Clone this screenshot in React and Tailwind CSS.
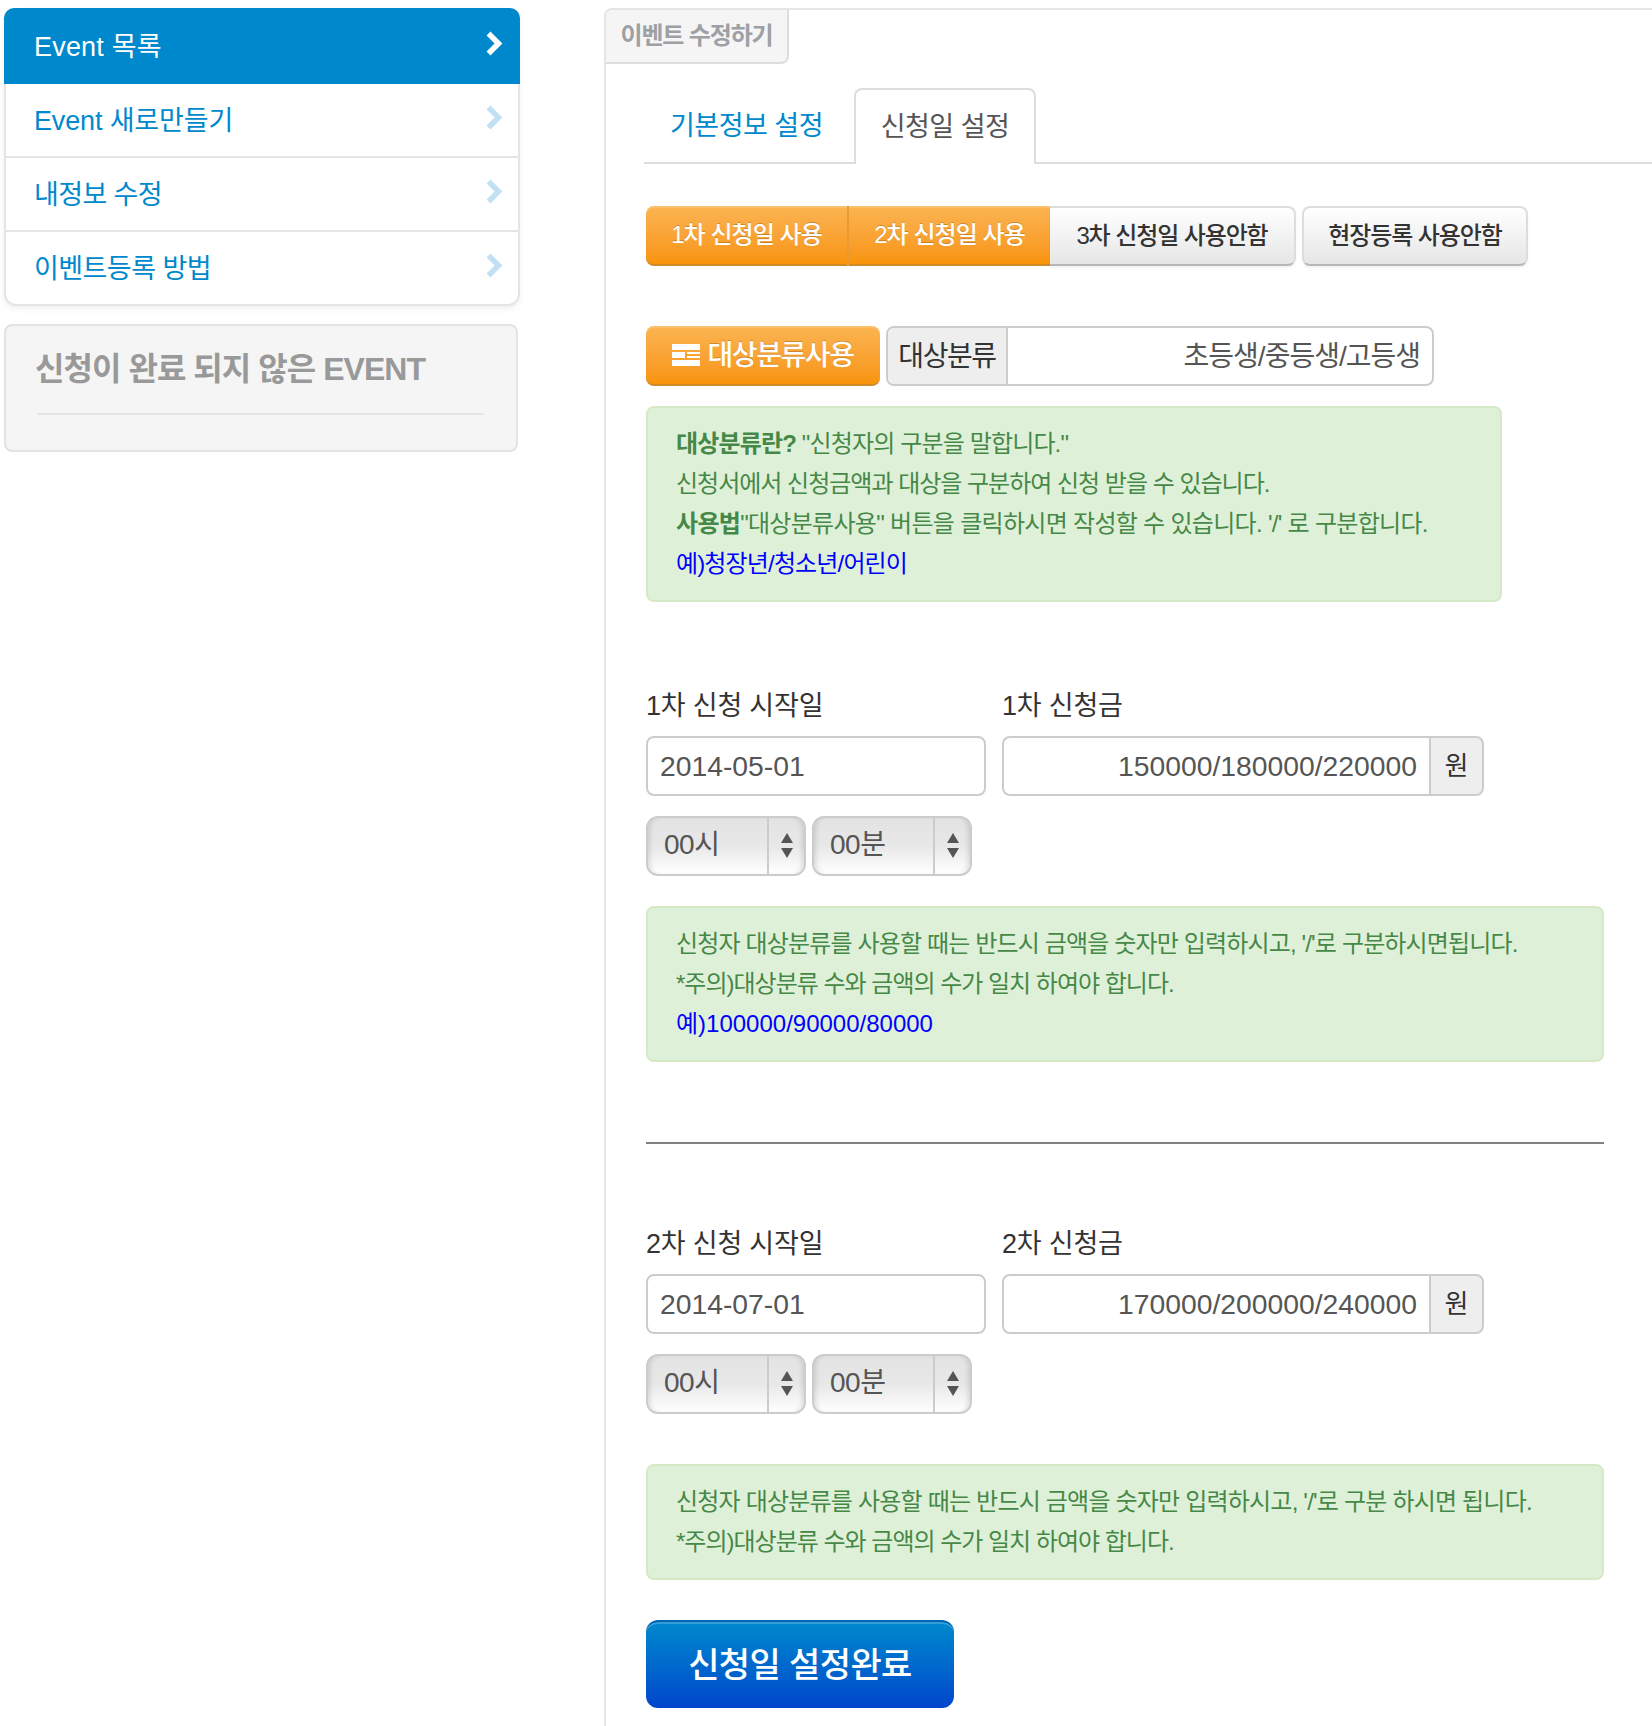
import React from 'react';

function Chevron({ active }) {
  return (
    <svg width="18" height="27" viewBox="0 0 18 27" className="shrink-0">
      <path d="M3.5 3.5 L13.5 13.5 L3.5 23.5" fill="none" stroke={active ? '#ffffff' : '#c2e0f4'} strokeWidth="5.5" />
    </svg>
  );
}

function SideItem({ label, active, last, track = 'tracking-[-0.15px]' }) {
  if (active) {
    return (
      <div className="h-[76px] -mx-[2px] -mt-[2px] pl-[30px] pr-[17px] flex items-center justify-between bg-[#0088cc] rounded-t-[10px] text-white text-[27px] tracking-[0.2px]">
        <span className="mt-[2px]">{label}</span>
        <span className="-mt-[6px]"><Chevron active /></span>
      </div>
    );
  }
  return (
    <div className={`${last ? 'h-[72px]' : 'h-[74px] border-b-2 border-[#e5e5e5]'} pl-[28px] pr-[15px] flex items-center justify-between text-[#0088cc] text-[27px] ${track}`}>
      <span className="mt-[2px]">{label}</span>
      <span className="-mt-[6px]"><Chevron /></span>
    </div>
  );
}

function OrangeButton({ children, className }) {
  return (
    <div className={`h-[60px] flex items-center justify-center text-white text-[24px] font-medium tracking-[-0.95px] [text-shadow:0_-1px_0_rgba(0,0,0,0.2)] bg-gradient-to-b from-[#fbb450] to-[#f89406] border-b-2 border-[#d08a2c] shadow-[inset_0_2px_0_rgba(255,255,255,0.15)] ${className}`}>
      {children}
    </div>
  );
}

function GrayButton({ children, className }) {
  return (
    <div className={`h-[60px] flex items-center justify-center text-[#333333] text-[24px] font-medium tracking-[-1.1px] bg-gradient-to-b from-white to-[#e6e6e6] border-2 border-[#dddddd] border-b-[#b8b8b8] shadow-[0_2px_3px_rgba(0,0,0,0.05)] ${className}`}>
      {children}
    </div>
  );
}

function TimeSelect({ label }) {
  return (
    <div className="w-[160px] h-[60px] flex border-2 border-[#cccccc] rounded-[12px] bg-gradient-to-b from-[#e3e3e3] via-[#e8e8e8] to-white shadow-[inset_5px_0_5px_-3px_rgba(0,0,0,0.12),inset_-5px_0_5px_-3px_rgba(0,0,0,0.12)] overflow-hidden">
      <div className="w-[119px] pl-[16px] flex items-center text-[#555555] text-[28px] leading-none -mt-[2px] tracking-[-0.5px]">{label}</div>
      <div className="flex-1 border-l-2 border-[#cccccc] flex flex-col items-center justify-center gap-[3px] -mt-[1px]">
        <svg width="14" height="12" viewBox="0 0 14 12"><path d="M7 1 L13 11 L1 11 Z" fill="#555555" /></svg>
        <svg width="14" height="12" viewBox="0 0 14 12"><path d="M1 1 L13 1 L7 11 Z" fill="#555555" /></svg>
      </div>
    </div>
  );
}

function DateBlock({ round, date, price }) {
  return (
    <div>
      <div className="flex">
        <div className="w-[356px]">
          <div className="text-[#333333] text-[27px] leading-[40px] tracking-[-0.2px] h-[40px] pt-[1px]">{round}차 신청 시작일</div>
          <div className="mt-[11px] w-[340px] h-[60px] border-2 border-[#cccccc] rounded-[8px] flex items-center pl-[12px] text-[#555555] text-[28.3px]">{date}</div>
        </div>
        <div>
          <div className="text-[#333333] text-[27px] leading-[40px] tracking-[-0.2px] h-[40px] pt-[1px]">{round}차 신청금</div>
          <div className="mt-[11px] flex h-[60px]">
            <div className="w-[427px] border-2 border-r-0 border-[#cccccc] rounded-l-[8px] flex items-center justify-end pr-[12px] text-[#555555] text-[28.3px]">{price}</div>
            <div className="w-[55px] border-2 border-[#cccccc] rounded-r-[8px] bg-[#eeeeee] flex items-center justify-center text-[#333333] text-[26px]">원</div>
          </div>
        </div>
      </div>
      <div className="mt-[20px] flex gap-[6px]">
        <TimeSelect label="00시" />
        <TimeSelect label="00분" />
      </div>
    </div>
  );
}

function Alert({ children, className }) {
  return (
    <div className={`bg-[#dff0d8] border-2 border-[#d6e9c6] rounded-[8px] text-[#468847] text-[24px] leading-[40px] tracking-[-0.85px] pl-[28px] pt-[16px] ${className}`}>
      {children}
    </div>
  );
}

export default function App() {
  return (
    <div className="w-[1652px] h-[1726px] bg-white overflow-hidden flex items-start font-['Liberation_Sans','Noto_Sans_CJK_KR',sans-serif]">
      {/* 왼쪽 메뉴 */}
      <div className="w-[604px] shrink-0 pl-[4px] pt-[8px]">
        <div className="w-[516px] bg-white border-2 border-[#e5e5e5] rounded-[12px] shadow-[0_3px_6px_rgba(0,0,0,0.06)]">
          <SideItem label="Event 목록" active />
          <SideItem label="Event 새로만들기" />
          <SideItem label="내정보 수정" track="tracking-[-0.6px]" />
          <SideItem label="이벤트등록 방법" last track="tracking-[-0.55px]" />
        </div>
        <div className="mt-[18px] w-[514px] h-[128px] bg-[#f5f5f5] border-2 border-[#e3e3e3] rounded-[8px] pl-[31px] pr-[32px] pt-[23px]">
          <div className="text-[#999999] text-[32px] font-bold leading-[40px] tracking-[-0.95px] pb-[24px] border-b-2 border-[#e5e5e5]"><span className="-ml-[2px]">신청이 완료 되지 않은 EVENT</span></div>
        </div>
      </div>

      {/* 본문 */}
      <div className="flex-1 mt-[8px] h-[1718px] border-l-2 border-t-2 border-[#e5e5e5] rounded-tl-[8px]">
        <div className="w-[183px] h-[54px] bg-[#f5f5f5] border-r-2 border-b-2 border-[#dddddd] rounded-tl-[6px] rounded-br-[8px] flex items-center justify-center text-[#9da0a4] text-[24px] font-bold tracking-[-1.15px]">이벤트 수정하기</div>

        <div className="ml-[38px] mt-[24px] h-[76px] flex border-b-2 border-[#dddddd]">
          <div className="w-[210px] pl-[26px] flex items-center text-[#0088cc] text-[27px] tracking-[-0.5px]"><span className="mt-[3px]">기본정보 설정</span></div>
          <div className="w-[182px] h-[76px] bg-white border-2 border-b-0 border-[#dddddd] rounded-t-[8px] flex items-center justify-center text-[#555555] text-[27px] tracking-[-0.5px]"><span className="mt-[1px]">신청일 설정</span></div>
        </div>

        <div className="ml-[40px] mt-[42px] flex">
          <OrangeButton className="w-[203px] rounded-l-[8px] border-r-2 border-r-[#ea9a2e]">1차 신청일 사용</OrangeButton>
          <OrangeButton className="w-[201px]">2차 신청일 사용</OrangeButton>
          <GrayButton className="w-[246px] rounded-r-[8px] border-l-0">3차 신청일 사용안함</GrayButton>
          <GrayButton className="w-[226px] ml-[6px] rounded-[8px]">현장등록 사용안함</GrayButton>
        </div>

        <div className="ml-[40px] mt-[60px] flex">
          <OrangeButton className="w-[234px] rounded-[8px]">
            <svg width="28" height="22" viewBox="0 0 28 22" className="mr-[7px]">
              <rect width="28" height="6" fill="#fff" />
              <rect y="8" width="13" height="6" fill="#fff" />
              <rect x="15" y="8" width="13" height="2" fill="#fff" />
              <rect x="15" y="12" width="13" height="2" fill="#fff" />
              <rect y="16" width="28" height="6" fill="#fff" />
            </svg>
            <span className="text-[28px] tracking-[-1.4px] mt-[2px]">대상분류사용</span>
          </OrangeButton>
          <div className="ml-[6px] w-[548px] h-[60px] flex border-2 border-[#cccccc] rounded-[8px] overflow-hidden">
            <div className="w-[120px] bg-[#eeeeee] border-r-2 border-[#cccccc] flex items-center justify-center text-[#333333] text-[28px] tracking-[-1.4px]"><span className="mt-[1px]">대상분류</span></div>
            <div className="flex-1 flex items-center justify-end pr-[12px] text-[#555555] text-[28px] tracking-[-1px]"><span className="mt-[1px]">초등생/중등생/고등생</span></div>
          </div>
        </div>

        <Alert className="ml-[40px] mt-[20px] w-[856px] h-[196px]">
          <div><b>대상분류란?</b> "신청자의 구분을 말합니다."</div>
          <div className="tracking-[-1px]">신청서에서 신청금액과 대상을 구분하여 신청 받을 수 있습니다.</div>
          <div className="tracking-[-0.7px]"><b>사용법</b>"대상분류사용" 버튼을 클릭하시면 작성할 수 있습니다. '/' 로 구분합니다.</div>
          <div className="text-[#0000ff]">예)청장년/청소년/어린이</div>
        </Alert>

        <div className="ml-[40px] mt-[83px]">
          <DateBlock round={1} date="2014-05-01" price="150000/180000/220000" />
        </div>

        <Alert className="ml-[40px] mt-[30px] w-[958px] h-[156px]">
          <div>신청자 대상분류를 사용할 때는 반드시 금액을 숫자만 입력하시고, '/'로 구분하시면됩니다.</div>
          <div className="tracking-[-1px]">*주의)대상분류 수와 금액의 수가 일치 하여야 합니다.</div>
          <div className="text-[#0000ff] tracking-[0px]">예)100000/90000/80000</div>
        </Alert>

        <div className="ml-[40px] mt-[80px] w-[958px] border-t-2 border-[#808080]" />

        <div className="ml-[40px] mt-[79px]">
          <DateBlock round={2} date="2014-07-01" price="170000/200000/240000" />
        </div>

        <Alert className="ml-[40px] mt-[50px] w-[958px] h-[116px]">
          <div className="tracking-[-0.8px]">신청자 대상분류를 사용할 때는 반드시 금액을 숫자만 입력하시고, '/'로 구분 하시면 됩니다.</div>
          <div className="tracking-[-1px]">*주의)대상분류 수와 금액의 수가 일치 하여야 합니다.</div>
        </Alert>

        <div className="ml-[40px] mt-[40px] w-[308px] h-[88px] rounded-[12px] bg-gradient-to-b from-[#0088cc] to-[#0044cc] border-t-2 border-[#0065b3] shadow-[inset_0_2px_0_rgba(255,255,255,0.2)] flex items-center justify-center text-white text-[34px] font-medium tracking-[-0.6px]">신청일 설정완료</div>
      </div>
    </div>
  );
}
